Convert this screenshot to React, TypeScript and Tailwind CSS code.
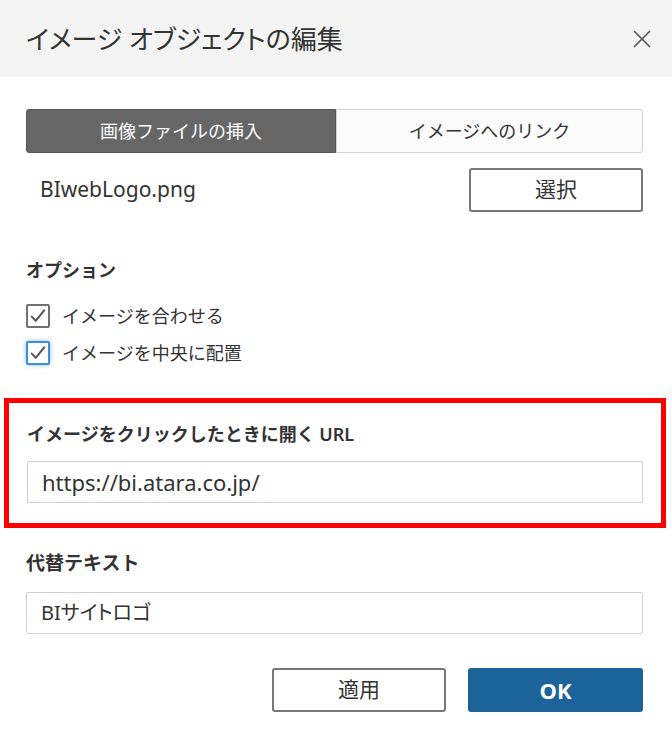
import { X } from "lucide-react";

const font = "font-['Noto_Sans','Noto_Sans_CJK_JP',sans-serif]";

function Check({ focused }: { focused?: boolean }) {
  return (
    <span
      className={[
        "flex h-[24px] w-[24px] items-center justify-center rounded-[2px] bg-white",
        focused
          ? "border-2 border-[#3a8fd6] shadow-[0_0_4px_rgba(58,143,214,0.6)]"
          : "border-2 border-[#707070]",
      ].join(" ")}
    >
      <svg viewBox="0 0 16 16" className="h-[18px] w-[18px]" fill="none">
        <path d="M2.5 8.5l3.5 3.8L13.5 3" stroke="#555" strokeWidth="1.8" strokeLinecap="round" strokeLinejoin="round" />
      </svg>
    </span>
  );
}

export default function App() {
  return (
    <div className={`${font} flex h-[734px] w-[672px] flex-col bg-white text-[#333]`}>
      {/* header */}
      <div className="flex h-[77px] shrink-0 items-center justify-between bg-[#f4f4f4] pl-[26px] pr-[15px]">
        <h1 className="text-[26px] font-normal leading-none text-[#333] [font-feature-settings:'palt']">
          イメージ オブジェクトの編集
        </h1>
        <X className="h-[30px] w-[30px] text-[#5a5a5a]" strokeWidth={1.4} />
      </div>

      {/* body */}
      <div className="flex flex-col pl-[26px] pr-[29px]">
        {/* tabs */}
        <div className="mt-[32px] flex h-[44px]">
          <div className="flex w-[310px] items-center justify-center rounded-l-[3px] border border-[#555] bg-[#666] text-[18px] text-white">
            画像ファイルの挿入
          </div>
          <div className="flex flex-1 items-center justify-center rounded-r-[3px] border border-[#d2d2d2] bg-[#fbfbfb] text-[18px] text-[#333]">
            イメージへのリンク
          </div>
        </div>

        {/* file row */}
        <div className="mt-[15px] flex h-[44px] items-center justify-between">
          <span className="pl-[14px] text-[21px] text-[#333]">BIwebLogo.png</span>
          <button className="h-[44px] w-[174px] rounded-[3px] border-2 border-[#777] bg-white text-[21px] text-[#333]">
            選択
          </button>
        </div>

        {/* options */}
        <div className="mt-[46px] text-[18px] font-semibold leading-[24px] text-[#333]">オプション</div>
        <div className="mt-[22px] flex flex-col gap-[13px]">
          <label className="flex h-[24px] items-center gap-[12px] text-[18px] text-[#333]">
            <Check />
            イメージを合わせる
          </label>
          <label className="flex h-[24px] items-center gap-[12px] text-[18px] text-[#333]">
            <Check focused />
            イメージを中央に配置
          </label>
        </div>

        {/* highlighted url section */}
        <div className="-ml-[22px] -mr-[23px] mt-[33px] border-[5px] border-[#ff0000] pb-[20px] pl-[18px] pr-[18px] pt-[19px]">
          <div className="text-[18px] font-semibold leading-[24px] text-[#333]">
            イメージをクリックしたときに開く URL
          </div>
          <div className="mt-[15px] flex h-[42px] items-center rounded-[2px] border border-[#cfcfcf] pl-[14px] text-[22px] text-[#333]">
            https://bi.atara.co.jp/
          </div>
        </div>

        {/* alt text */}
        <div className="mt-[23px] text-[19px] font-semibold leading-[24px] text-[#333]">代替テキスト</div>
        <div className="mt-[17px] flex h-[42px] items-center rounded-[2px] border border-[#cfcfcf] pl-[14px] text-[20px] text-[#333] [font-feature-settings:'palt']">
          BIサイトロゴ
        </div>

        {/* footer buttons */}
        <div className="mt-[34px] flex justify-end gap-[22px]">
          <button className="h-[44px] w-[174px] rounded-[3px] border-2 border-[#777] bg-white text-[21px] text-[#333]">
            適用
          </button>
          <button className="h-[44px] w-[175px] rounded-[3px] bg-[#1b6399] text-[22px] font-bold text-white">
            OK
          </button>
        </div>
      </div>
    </div>
  );
}
